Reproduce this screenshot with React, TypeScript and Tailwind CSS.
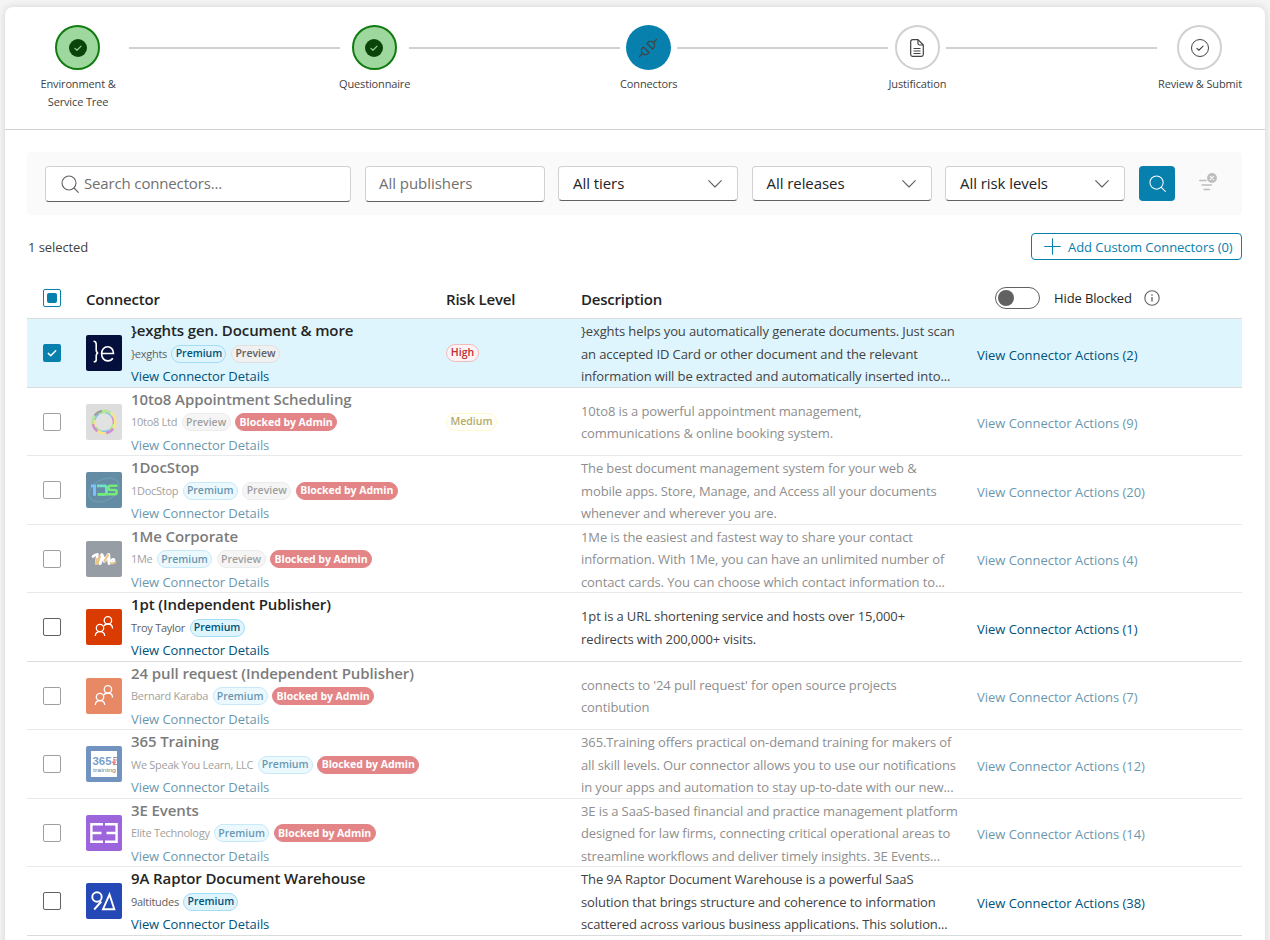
import React from "react";

type Tag = "Premium" | "Preview" | "Blocked by Admin";

interface Connector {
  title: string;
  publisher: string;
  tags: Tag[];
  risk?: "High" | "Medium";
  description: string[];
  actions: number;
  blocked?: boolean;
  selected?: boolean;
  logo: () => React.ReactElement;
}

function ExghtsLogo() {
  return (
    <svg viewBox="0 0 36 36" className="size-9 rounded-xs bg-[#04103b]" fill="none" stroke="#fff" strokeWidth="1.600">
      <path d="M7.500 6.200c2.200 0 2.700 1 2.700 3v5.600c0 1.800.4 2.900 1.900 3.200-1.500.3-1.900 1.400-1.900 3.200v3.700c0 1.500-.7 1.900-2.500 1.900" />
      <path d="M15.700 18.500h11.800c0-4-2.500-6.800-5.900-6.800-3.500 0-6 3-6 7 0 4.200 2.600 7.200 6.200 7.200 2.200 0 3.900-.9 5-2.600" />
    </svg>
  );
}

const ringOuter = ["#7ed957", "#f5d33c", "#f5d33c", "#b14bb0", "#f5d33c", "#b14bb0", "#7ed957", "#606060"];
const ringInner = ["#3ba0e0", "#b14bb0", "#7ed957", "#3ba0e0", "#7ed957", "#f5d33c", "#3ba0e0", "#7ed957"];

function RingLogo() {
  return (
    <svg viewBox="0 0 36 36" className="size-9 rounded-xs bg-[#c8c8c8]" fill="none">
      <circle cx="18" cy="18" r="8.800" fill="#d0d0d0" />
      <g transform="rotate(-100 18 18)">
        {ringInner.map((color, i) => (
          <circle key={i} cx="18" cy="18" r="9.600" stroke={color} strokeWidth="2" pathLength="8" strokeDasharray="1 7" strokeDashoffset={-i - 0.5} />
        ))}
        {ringOuter.map((color, i) => (
          <circle key={i} cx="18" cy="18" r="11.300" stroke={color} strokeWidth="2.400" pathLength="8" strokeDasharray="1 7" strokeDashoffset={-i} />
        ))}
      </g>
    </svg>
  );
}

function DocStopLogo() {
  return (
    <svg viewBox="0 0 36 36" className="size-9 rounded-xs bg-[#00416b]" fill="none">
      <ellipse cx="18" cy="18" rx="16" ry="10.500" transform="rotate(-28 18 18)" stroke="#0b5f7d" strokeWidth="1.200" />
      <path d="M5 13.800h3.500v9.900" stroke="#2a9cff" strokeWidth="2.800" />
      <path d="M11 13.800h7.500q2 0 2 2v4.500q0 2-2 2H12" stroke="#12cfa0" strokeWidth="2.800" />
      <path d="M31.500 13.800H24q-1.200 0-1.200 1.200v1.800q0 1.200 1.200 1.200h5.300q1.200 0 1.200 1.200v1.900q0 1.200-1.200 1.200H11.500" stroke="#16e01c" strokeWidth="2.600" />
    </svg>
  );
}

function OneMeLogo() {
  return (
    <svg viewBox="0 0 36 36" className="size-9 rounded-xs bg-[#525d6b]" fill="none" strokeLinecap="round" strokeLinejoin="round">
      <path d="M7 15.500c1.500-1.500 3-2.300 4.500-2.300l-1.300 9" stroke="#fff" strokeWidth="2.600" />
      <path d="M14 22.300 15.800 14l2.500 6 4.200-6.300.7 8.500" stroke="#fff" strokeWidth="3.400" />
      <path d="m11.500 22.500 2.500-7M18.500 20l3.500-6M10 23l1-5" stroke="#e0a040" strokeWidth="2.200" />
      <path d="M25 21c3-.2 3.800-1.500 3.300-2.500-.8-1.200-3.100-.3-3.300 1.900" stroke="#fff" strokeWidth="2" />
      <path d="M24.500 21.800c1.500 1.200 3.800.9 5-.8" stroke="#e0a040" strokeWidth="1.700" />
    </svg>
  );
}

function PeopleLogo() {
  return (
    <svg viewBox="0 0 36 36" className="size-9 rounded-xs bg-[#da3b01]" fill="none" stroke="#fff" strokeWidth="1.300">
      <circle cx="21.900" cy="11.400" r="3.700" />
      <circle cx="14" cy="19" r="3.700" />
      <path d="M9.300 27c.1-2.700 1.900-4.300 4.700-4.300s4.600 1.600 4.700 4.300" />
      <path d="M17.800 16.900c.8-1.300 2.200-1.900 4.100-1.900 2.800 0 4.600 1.800 4.700 4.600" />
    </svg>
  );
}

function Training365Logo() {
  return (
    <svg viewBox="0 0 36 36" className="size-9 rounded-xs bg-[#164d96]">
      <path d="M5 5h26v26H5z" fill="#fff" />
      <text x="6.500" y="18.500" textLength="19" lengthAdjust="spacingAndGlyphs" fontSize="11" fontWeight="700" fill="#1b5fa8" fontFamily="Liberation Sans, sans-serif">365</text>
      <path d="M27 11.500h4M27.500 14h3.500M27 18.500h4" stroke="#555" strokeWidth="1" />
      <path d="M28 12.500v5m-1.700-1.800 1.700 1.800 1.700-1.800" stroke="#e22" strokeWidth="1.300" fill="none" />
      <text x="7" y="25.900" textLength="23" lengthAdjust="spacingAndGlyphs" fontSize="5.500" fill="#222" fontFamily="Liberation Sans, sans-serif">training</text>
    </svg>
  );
}

function ThreeELogo() {
  return (
    <svg viewBox="0 0 36 36" className="size-9 rounded-xs bg-[#5c00c5]" fill="none" stroke="#fff" strokeWidth="2.400">
      <path d="M17 9.200H5.400v17.600H17M5.400 18H15.500" />
      <path d="M19 9.200h11.600v17.600H19M30.600 18H20.500" />
    </svg>
  );
}

function NineALogo() {
  return (
    <svg viewBox="0 0 36 36" className="size-9 rounded-xs bg-[#2448b5]" fill="none" stroke="#fff" strokeWidth="1.900">
      <circle cx="11" cy="14" r="4.700" />
      <path d="M15.300 18.500 8.200 26.500M17 26.200h11.300L23.500 11.500z" />
    </svg>
  );
}

const connectors: Connector[] = [
  {
    title: "}exghts gen. Document & more",
    publisher: "}exghts",
    tags: ["Premium", "Preview"],
    risk: "High",
    description: [
      "}exghts helps you automatically generate documents. Just scan",
      "an accepted ID Card or other document and the relevant",
      "information will be extracted and automatically inserted into...",
    ],
    actions: 2,
    selected: true,
    logo: ExghtsLogo,
  },
  {
    title: "10to8 Appointment Scheduling",
    publisher: "10to8 Ltd",
    tags: ["Preview", "Blocked by Admin"],
    risk: "Medium",
    description: ["10to8 is a powerful appointment management,", "communications & online booking system."],
    actions: 9,
    blocked: true,
    logo: RingLogo,
  },
  {
    title: "1DocStop",
    publisher: "1DocStop",
    tags: ["Premium", "Preview", "Blocked by Admin"],
    description: [
      "The best document management system for your web &",
      "mobile apps. Store, Manage, and Access all your documents",
      "whenever and wherever you are.",
    ],
    actions: 20,
    blocked: true,
    logo: DocStopLogo,
  },
  {
    title: "1Me Corporate",
    publisher: "1Me",
    tags: ["Premium", "Preview", "Blocked by Admin"],
    description: [
      "1Me is the easiest and fastest way to share your contact",
      "information. With 1Me, you can have an unlimited number of",
      "contact cards. You can choose which contact information to...",
    ],
    actions: 4,
    blocked: true,
    logo: OneMeLogo,
  },
  {
    title: "1pt (Independent Publisher)",
    publisher: "Troy Taylor",
    tags: ["Premium"],
    description: ["1pt is a URL shortening service and hosts over 15,000+", "redirects with 200,000+ visits."],
    actions: 1,
    logo: PeopleLogo,
  },
  {
    title: "24 pull request (Independent Publisher)",
    publisher: "Bernard Karaba",
    tags: ["Premium", "Blocked by Admin"],
    description: ["connects to '24 pull request' for open source projects", "contibution"],
    actions: 7,
    blocked: true,
    logo: PeopleLogo,
  },
  {
    title: "365 Training",
    publisher: "We Speak You Learn, LLC",
    tags: ["Premium", "Blocked by Admin"],
    description: [
      "365.Training offers practical on-demand training for makers of",
      "all skill levels. Our connector allows you to use our notifications",
      "in your apps and automation to stay up-to-date with our new...",
    ],
    actions: 12,
    blocked: true,
    logo: Training365Logo,
  },
  {
    title: "3E Events",
    publisher: "Elite Technology",
    tags: ["Premium", "Blocked by Admin"],
    description: [
      "3E is a SaaS-based financial and practice management platform",
      "designed for law firms, connecting critical operational areas to",
      "streamline workflows and deliver timely insights. 3E Events...",
    ],
    actions: 14,
    blocked: true,
    logo: ThreeELogo,
  },
  {
    title: "9A Raptor Document Warehouse",
    publisher: "9altitudes",
    tags: ["Premium"],
    description: [
      "The 9A Raptor Document Warehouse is a powerful SaaS",
      "solution that brings structure and coherence to information",
      "scattered across various business applications. This solution...",
    ],
    actions: 38,
    logo: NineALogo,
  },
];

function SearchIcon({ className }: { className: string }) {
  return (
    <svg viewBox="0 0 18 18" className={className} fill="none" stroke="currentColor" strokeWidth="1.100" strokeLinecap="round">
      <circle cx="8" cy="8" r="7" />
      <path d="m13 13 4.300 4.300" />
    </svg>
  );
}

function Check({ className }: { className: string }) {
  return (
    <svg viewBox="0 0 12 12" className={className} fill="none" stroke="currentColor" strokeLinecap="round" strokeLinejoin="round">
      <path d="m2.300 6.400 2.400 2.300 5-5" />
    </svg>
  );
}

function DoneCircle() {
  return (
    <div className="flex size-[45px] items-center justify-center rounded-full border-2 border-[#107c10] bg-[#9fd89f]">
      <div className="flex size-[18px] items-center justify-center rounded-full bg-[#094509]">
        <Check className="size-2.5 stroke-[1.300] text-[#9fd89f]" />
      </div>
    </div>
  );
}

function StepLine() {
  return <div className="mt-[22px] h-0.5 flex-1 bg-[#d1d1d1]" />;
}

function Step({ width, labels, children }: { width: string; labels: string[]; children: React.ReactNode }) {
  return (
    <div className={`${width} flex shrink-0 flex-col items-center`}>
      {children}
      <div className="mt-[5px] pl-px text-center text-[11px] leading-[18px] tracking-[-0.14px] whitespace-nowrap text-[#424242]">
        {labels.map((l) => (
          <div key={l}>{l}</div>
        ))}
      </div>
    </div>
  );
}

function Stepper() {
  return (
    <div className="flex h-[123px] items-start border-b border-[#d1d1d1] pt-[18px] pr-[23px] pl-[21.500px]">
      <Step width="w-[102px]" labels={["Environment &", "Service Tree"]}>
        <DoneCircle />
      </Step>
      <StepLine />
      <Step width="w-[69px]" labels={["Questionnaire"]}>
        <DoneCircle />
      </Step>
      <StepLine />
      <Step width="w-[57px]" labels={["Connectors"]}>
        <div className="flex size-[45px] items-center justify-center rounded-full bg-[#0780ad] text-[#424242]">
          <svg viewBox="0 0 20 20" className="size-5" fill="none" stroke="currentColor" strokeWidth="1.200" strokeLinecap="round" strokeLinejoin="round">
            <path d="m1.500 18.500 3-3M15.500 4.500l3-3" />
            <path d="m5.500 9 5.500 5.500-1 1a3.600 3.600 0 0 1-5.500-5.500z" />
            <path d="m9 5.500 5.500 5.500 1-1a3.600 3.600 0 0 0-5.500-5.500z" />
          </svg>
        </div>
      </Step>
      <StepLine />
      <Step width="w-[58px]" labels={["Justification"]}>
        <div className="ml-px flex size-[45px] items-center justify-center rounded-full border-2 border-[#d1d1d1] text-[#424242]">
          <svg viewBox="0 0 14 18" className="h-[18px] w-3.5" fill="none" stroke="currentColor" strokeWidth="1.200" strokeLinejoin="round">
            <path d="M2.500.7H8l5.300 5.300v9.500a1.800 1.800 0 0 1-1.800 1.800h-9A1.800 1.800 0 0 1 .7 15.500v-13A1.800 1.800 0 0 1 2.500.7z" />
            <path d="M8 .7v3.800A1.500 1.500 0 0 0 9.500 6h3.800M3.500 9.500h7M3.500 12h7M3.500 14.500h7" />
          </svg>
        </div>
      </Step>
      <StepLine />
      <Step width="w-[85px]" labels={["Review & Submit"]}>
        <div className="flex size-[45px] items-center justify-center rounded-full border-2 border-[#d1d1d1] text-[#424242]">
          <div className="flex size-[18px] items-center justify-center rounded-full border border-[#424242]">
            <Check className="size-2.5 stroke-[1.300]" />
          </div>
        </div>
      </Step>
    </div>
  );
}

function Select({ label }: { label: string }) {
  return (
    <div className="flex h-[35px] w-[180px] items-center justify-between rounded border border-[#d1d1d1] border-b-[#616161] bg-white pr-[15px] pl-3.5 tracking-[-0.06px] text-[#242424]">
      <span>{label}</span>
      <svg viewBox="0 0 14 8" className="h-2 w-3.5 text-[#616161]" fill="none" stroke="currentColor" strokeWidth="1.100" strokeLinecap="round" strokeLinejoin="round">
        <path d="m.7.700 6.300 6.300 6.300-6.300" />
      </svg>
    </div>
  );
}

function Filters() {
  return (
    <div className="flex h-[63px] items-start rounded bg-[#fafafa] pt-3.5 pl-[18px] text-[15px] whitespace-nowrap">
      <div className="mr-3.5 flex h-9 w-[306px] items-center rounded border border-[#d1d1d1] border-b-[#616161] bg-white pl-[15px] text-[#707070]">
        <SearchIcon className="mr-[5px] size-[18px] text-[#616161]" />
        <span className="pb-0.5 tracking-[-0.15px]">Search connectors...</span>
      </div>
      <div className="mr-[13px] flex h-9 w-[180px] items-center rounded border border-[#d1d1d1] border-b-[#616161] bg-white pb-0.5 pl-[13px] tracking-[-0.05px] text-[#707070]">
        All publishers
      </div>
      <div className="flex gap-[13.5px]">
        <Select label="All tiers" />
        <Select label="All releases" />
        <Select label="All risk levels" />
      </div>
      <div className="ml-3.5 flex h-[35px] w-9 items-center justify-center rounded bg-[#0780ad] text-white">
        <SearchIcon className="size-[17px]" />
      </div>
      <svg viewBox="0 0 18 18" className="mt-[7px] ml-6 size-[18px]" fill="none" stroke="#bdbdbd" strokeWidth="1.300" strokeLinecap="round">
        <path d="M.7 7.500h6.500M3 12h9.500M5 16.500h5.500" />
        <circle cx="13" cy="5" r="4.900" fill="#bdbdbd" stroke="none" />
        <path d="m11.300 3.300 3.400 3.400m0-3.400-3.400 3.400" stroke="#fafafa" strokeWidth="1.100" />
      </svg>
    </div>
  );
}

const tagStyles: Record<Tag, string> = {
  Premium: "ml-[4.500px] w-[55px] border-[#a3dcf5] bg-[#dff5fe] font-semibold text-[#00527a]",
  Preview: "ml-[4.500px] w-[49px] border-[#e0e0e0] bg-[#f0f0f0] font-semibold text-[#616161]",
  "Blocked by Admin": "ml-[4.500px] w-[102px] border-[#d13438] bg-[#d13438] font-bold tracking-[-0.05px] text-white",
};

function ConnectorRow({ c }: { c: Connector }) {
  const Logo = c.logo;
  return (
    <div
      className={`grid h-[68.5px] grid-cols-[59px_360px_135px_396px_1fr] grid-rows-[67px] items-center border-b border-[#d9dcdd] pt-[0.6px] whitespace-nowrap ${c.selected ? "bg-[#dff5fe]" : ""} ${c.blocked ? "opacity-60" : ""}`}
    >
      <div className="pl-4">
        {c.selected ? (
          <div className="flex size-[18px] items-center justify-center rounded-xs bg-[#0780ad] text-white">
            <Check className="size-3 stroke-[1.500]" />
          </div>
        ) : (
          <div className="size-[18px] rounded-xs border border-[#616161]" />
        )}
      </div>
      <div className="flex items-center">
        <Logo />
        <div className="ml-[9px] pt-[1.600px]">
          <div className="text-[15px] leading-[21px] font-semibold tracking-[-0.1px] text-[#242424]">{c.title}</div>
          <div className="flex h-[25px] items-center text-[11px] text-[#616161]">
            <span className="tracking-[-0.28px]">{c.publisher}</span>
            {c.tags.map((t) => (
              <span
                key={t}
                className={`${tagStyles[t]} flex h-[18px] shrink-0 items-center justify-center rounded-full border text-[10.500px]`}
              >
                {t}
              </span>
            ))}
          </div>
          <div className="text-[13px] leading-[21px] tracking-[-0.07px] text-[#00527a]">View Connector Details</div>
        </div>
      </div>
      <div>
        {c.risk === "High" && (
          <span className="flex h-[18px] w-[33px] items-center justify-center rounded-full border border-[#f1bbbc] bg-[#fdf3f4] text-[10.500px] font-semibold text-[#bc2f32]">
            High
          </span>
        )}
        {c.risk === "Medium" && (
          <span className="flex h-[18px] w-[51px] items-center justify-center rounded-full border border-[#fef7b2] bg-[#fffef5] text-[10.500px] font-semibold text-[#817400]">
            Medium
          </span>
        )}
      </div>
      <div className="pt-[1.500px] text-[13px] leading-[22.400px] tracking-[-0.11px] text-[#424242]">
        {c.description.map((line) => (
          <div key={line}>{line}</div>
        ))}
      </div>
      <div className="pt-[4.800px] text-[13px] tracking-[-0.03px] text-[#00527a]">View Connector Actions ({c.actions})</div>
    </div>
  );
}

export default function App() {
  return (
    <div className="h-[940px] overflow-hidden bg-[#f5f5f5] px-[5px] pt-[7px] font-['Open_Sans','Noto_Sans',sans-serif]">
      <div className="h-[960px] rounded-lg bg-white shadow-[0_0_8px_rgba(0,0,0,0.14)]">
        <Stepper />
        <div className="pt-[22px] pr-[23px] pl-[22px]">
          <Filters />
          <div className="mt-[18px] flex h-[27px] items-center justify-between text-[13px]">
            <span className="pt-0.5 pl-px tracking-[-0.08px] text-[#424242]">1 selected</span>
            <div className="flex h-[27px] w-[211px] items-center rounded border border-[#0780ad] pl-3 whitespace-nowrap text-[#0780ad]">
              <svg viewBox="0 0 17 17" className="mr-[7px] size-[17px] shrink-0" stroke="currentColor" strokeWidth="1.100" strokeLinecap="round">
                <path d="M8.500.700v15.600M.700 8.500h15.600" />
              </svg>
              <span className="pt-0.5 tracking-[-0.04px]">Add Custom Connectors (0)</span>
            </div>
          </div>
          <div className="mt-[19px] grid h-[40px] grid-cols-[59px_360px_135px_414px_1fr] items-center border-b border-[#d9dcdd] text-[15px] font-semibold tracking-[-0.2px] whitespace-nowrap text-[#242424]">
            <div className="pl-4">
              <div className="mb-0.5 flex size-[18px] items-center justify-center rounded-xs border border-[#0780ad]">
                <div className="size-2.5 rounded-xs bg-[#0780ad]" />
              </div>
            </div>
            <div className="pt-0.5 tracking-[-0.16px]">Connector</div>
            <div className="pt-0.5">Risk Level</div>
            <div className="pt-0.5">Description</div>
            <div className="flex items-center pb-px">
              <div className="flex h-[22px] w-[45px] items-center rounded-full border border-[#616161] pl-0.5">
                <div className="size-4 rounded-full bg-[#616161]" />
              </div>
              <span className="ml-3.5 pt-0.5 text-[13px] font-normal tracking-[-0.12px]">Hide Blocked</span>
              <svg viewBox="0 0 16 16" className="ml-3 size-4 text-[#616161]" fill="none" stroke="currentColor" strokeWidth="1.100">
                <circle cx="8" cy="8" r="7.200" />
                <path d="M8 7v4.500M8 4.300v1.400" strokeWidth="1.300" />
              </svg>
            </div>
          </div>
          {connectors.map((c) => (
            <ConnectorRow key={c.title} c={c} />
          ))}
        </div>
      </div>
    </div>
  );
}
